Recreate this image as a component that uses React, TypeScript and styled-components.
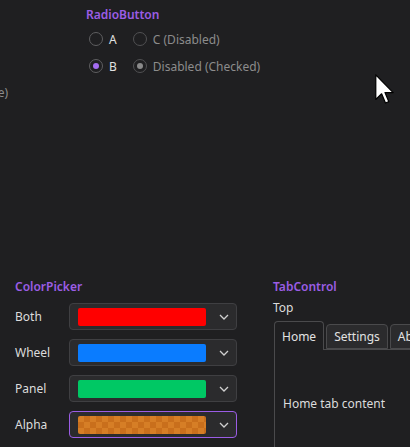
import styled, { createGlobalStyle, css } from 'styled-components';

const GlobalStyle = createGlobalStyle`
  html, body {
    margin: 0;
    padding: 0;
    background: #1f1f21;
  }
  body {
    font-family: "Noto Sans", "Open Sans", sans-serif;
    font-size: 12px;
    color: #dcdcdc;
  }
`;

const Page = styled.div`
  position: relative;
  width: 410px;
  height: 447px;
  overflow: hidden;
  background: #1f1f21;
`;

const TopRow = styled.div`
  display: flex;
  align-items: flex-start;
  height: 277px;
`;

const BottomRow = styled.div`
  display: grid;
  grid-template-columns: 258px 1fr;
  padding-left: 15px;
`;

const Section = styled.section<{ $offset?: number }>`
  display: flex;
  flex-direction: column;
  margin-left: ${(p) => p.$offset ?? 0}px;
`;

const Heading = styled.h3`
  margin: 0;
  height: 20px;
  line-height: 20px;
  font-size: 12px;
  font-weight: 600;
  color: #9b5de5;
`;

const Muted = styled.span`
  color: #8c8c8c;
  white-space: nowrap;
`;

/* left column, mostly scrolled out of view */
const ClippedColumn = styled.div`
  width: 80px;
  margin-left: -72px;
  padding-top: 84px;
  display: flex;
  justify-content: flex-end;
  line-height: 18px;
`;

const RadioGrid = styled.div`
  display: grid;
  grid-template-columns: auto auto;
  column-gap: 16px;
  row-gap: 9px;
  margin-top: 5px;
  margin-left: 3px;
`;

const RadioLabel = styled.label<{ $disabled?: boolean }>`
  display: flex;
  align-items: center;
  gap: 6px;
  height: 18px;
  color: ${(p) => (p.$disabled ? '#8c8c8c' : '#e2e2e2')};
  white-space: nowrap;
`;

const RadioDot = styled.span<{ $checked?: boolean; $disabled?: boolean }>`
  box-sizing: border-box;
  width: 14px;
  height: 14px;
  border-radius: 50%;
  border: 1px solid ${(p) => (p.$disabled ? '#515153' : '#5e5e60')};
  display: flex;
  align-items: center;
  justify-content: center;
  ${(p) =>
    p.$checked &&
    css`
      &::after {
        content: '';
        width: 6px;
        height: 6px;
        border-radius: 50%;
        background: ${p.$disabled ? '#8a8a8a' : '#a46cf0'};
      }
    `}
`;

const PickerRows = styled.div`
  display: flex;
  flex-direction: column;
  gap: 9px;
  margin-top: 6px;
`;

const PickerRow = styled.div`
  display: flex;
  align-items: center;
`;

const PickerLabel = styled.span`
  width: 54px;
`;

const PickerBox = styled.div<{ $focused?: boolean }>`
  box-sizing: border-box;
  width: 168px;
  height: 27px;
  display: flex;
  align-items: center;
  padding-left: 8px;
  border: 1px solid ${(p) => (p.$focused ? '#9b5de5' : '#3f3f42')};
  border-radius: 4px;
  background: #2b2b2d;
`;

const Swatch = styled.span<{ $color: string; $checker?: boolean }>`
  width: 128px;
  height: 18px;
  border-radius: 2px;
  background: ${(p) => p.$color};
  ${(p) =>
    p.$checker &&
    css`
      background: repeating-conic-gradient(#c96f1c 0 25%, #d67e26 0 50%) 0 0 / 12px 12px;
    `}
`;

const Chevron = styled.svg`
  margin-left: auto;
  margin-right: 7px;
`;

const SubLabel = styled.div`
  margin-top: 2px;
  height: 18px;
  line-height: 18px;
`;

const TabStrip = styled.div`
  display: flex;
  align-items: flex-end;
  margin-top: 4px;
  margin-left: 1px;
  height: 28px;
  border-bottom: 1px solid #4a4a4c;
`;

const Tab = styled.div<{ $active?: boolean }>`
  box-sizing: border-box;
  height: ${(p) => (p.$active ? 29 : 25)}px;
  margin-bottom: ${(p) => (p.$active ? -1 : 0)}px;
  margin-right: 2px;
  padding: 0 7px;
  display: flex;
  align-items: center;
  white-space: nowrap;
  border: 1px solid #4a4a4c;
  border-bottom: ${(p) => (p.$active ? 'none' : '1px solid #4a4a4c')};
  border-radius: 4px 4px 0 0;
  background: ${(p) => (p.$active ? '#1f1f21' : '#2b2b2d')};
  color: #e2e2e2;
`;

const TabPanel = styled.div`
  margin-left: 1px;
  height: 120px;
  border-left: 1px solid #4a4a4c;
  padding: 45px 0 0 8px;
`;

const Cursor = styled.svg`
  position: absolute;
  left: 375px;
  top: 74px;
`;

const pickers = [
  { label: 'Both', color: '#ff0000' },
  { label: 'Wheel', color: '#0a7cff' },
  { label: 'Panel', color: '#00c864' },
  { label: 'Alpha', color: '#d47b24', checker: true, focused: true },
];

function ChevronDown() {
  return (
    <Chevron width="10" height="6" viewBox="0 0 10 6">
      <path d="M1 1l4 4 4-4" fill="none" stroke="#d0d0d0" strokeWidth="1.3" />
    </Chevron>
  );
}

export default function App() {
  return (
    <Page>
      <GlobalStyle />
      <TopRow>
        <ClippedColumn>
          <Muted>(Indeterminate)</Muted>
        </ClippedColumn>
        <Section $offset={78} style={{ paddingTop: 5 }}>
          <Heading>RadioButton</Heading>
          <RadioGrid>
            <RadioLabel>
              <RadioDot /> A
            </RadioLabel>
            <RadioLabel $disabled>
              <RadioDot $disabled /> C (Disabled)
            </RadioLabel>
            <RadioLabel>
              <RadioDot $checked /> B
            </RadioLabel>
            <RadioLabel $disabled>
              <RadioDot $checked $disabled /> Disabled (Checked)
            </RadioLabel>
          </RadioGrid>
        </Section>
      </TopRow>

      <BottomRow>
        <Section>
          <Heading>ColorPicker</Heading>
          <PickerRows>
            {pickers.map((p) => (
              <PickerRow key={p.label}>
                <PickerLabel>{p.label}</PickerLabel>
                <PickerBox $focused={p.focused}>
                  <Swatch $color={p.color} $checker={p.checker} />
                  <ChevronDown />
                </PickerBox>
              </PickerRow>
            ))}
          </PickerRows>
        </Section>

        <Section>
          <Heading>TabControl</Heading>
          <SubLabel>Top</SubLabel>
          <TabStrip>
            <Tab $active>Home</Tab>
            <Tab>Settings</Tab>
            <Tab>About</Tab>
          </TabStrip>
          <TabPanel>Home tab content</TabPanel>
        </Section>
      </BottomRow>

      <Cursor width="20" height="31" viewBox="0 0 13 20">
        <path
          d="M0.5 0.5 L0.5 16.5 L4.3 12.8 L6.8 18.8 L9 17.9 L6.5 12 L11.8 12 Z"
          fill="#ffffff"
          stroke="#000000"
          strokeWidth="0.8"
          strokeLinejoin="round"
        />
      </Cursor>
    </Page>
  );
}
